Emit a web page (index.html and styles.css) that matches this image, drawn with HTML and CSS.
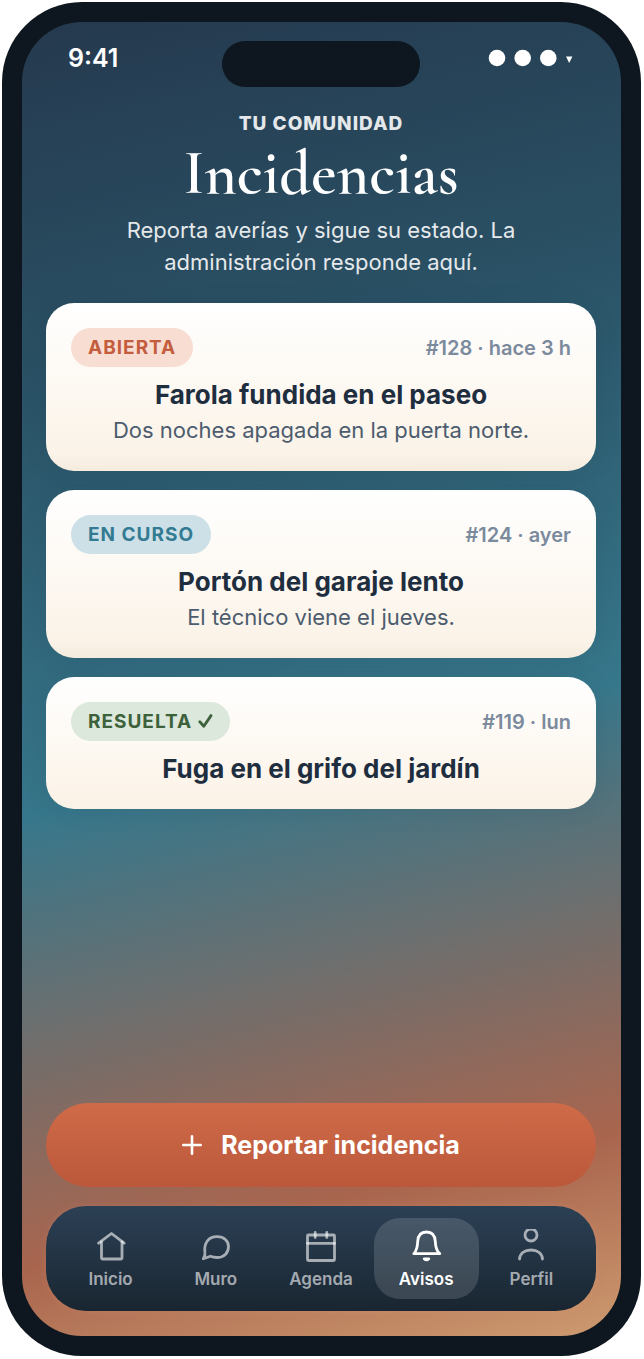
FILE: index.html
```html
<!DOCTYPE html>
<html lang="es">
<head>
<meta charset="utf-8">
<meta name="viewport" content="width=device-width, initial-scale=1">
<title>Incidencias</title>
<link rel="stylesheet" href="styles.css">
</head>
<body>
<div class="phone">
  <div class="screen">
    <div class="status">
      <span class="status-time">9:41</span>
      <span class="island"></span>
      <svg class="status-icons" width="84" height="18" viewBox="0 0 84 18" aria-hidden="true">
        <circle cx="8" cy="9" r="8.3"/><circle cx="33.700" cy="9" r="8.300"/><circle cx="59.300" cy="9" r="8.300"/>
        <path d="M77 7.500h6.400L80.200 14z"/>
      </svg>
    </div>
    <header class="intro">
      <p class="eyebrow">TU COMUNIDAD</p>
      <h1 class="title">Incidencias</h1>
      <p class="lead">Reporta averías y sigue su estado. La administración responde aquí.</p>
    </header>
    <main class="list">
      <article class="card">
        <div class="card-top"><span class="chip chip-open">ABIERTA</span><span class="meta">#128 · hace 3 h</span></div>
        <h2 class="card-title">Farola fundida en el paseo</h2>
        <p class="card-text">Dos noches apagada en la puerta norte.</p>
      </article>
      <article class="card">
        <div class="card-top"><span class="chip chip-progress">EN CURSO</span><span class="meta">#124 · ayer</span></div>
        <h2 class="card-title">Portón del garaje lento</h2>
        <p class="card-text">El técnico viene el jueves.</p>
      </article>
      <article class="card">
        <div class="card-top"><span class="chip chip-done">RESUELTA <svg class="tick" width="15" height="14" viewBox="0 0 15 14" aria-hidden="true"><path d="M1.800 7.800 5.800 12.200 13 1.600"/></svg></span><span class="meta">#119 · lun</span></div>
        <h2 class="card-title">Fuga en el grifo del jardín</h2>
      </article>
    </main>
    <button class="report" type="button">
      <svg width="20" height="20" viewBox="0 0 20 20" aria-hidden="true"><path d="M10 1.300v17.400M1.300 10h17.400"/></svg>
      Reportar incidencia
    </button>
    <nav class="tabs">
      <a class="tab" href="#inicio">
        <svg viewBox="0 0 34 34" aria-hidden="true"><path d="M4.600 14.200 17.500 4.500 30.200 14.200"/><path d="M7.500 13v15.500q0 1.500 1.500 1.500h17.500q1.500 0 1.500-1.500V13"/></svg>
        Inicio
      </a>
      <a class="tab" href="#muro">
        <svg viewBox="0 0 34 34" aria-hidden="true"><path d="M29.500 17.500C29.500 24 25 28.500 18 28.500C15.500 28.500 13.500 28.200 11.500 27.200L4.300 29.800C5.800 27.500 6.300 25.500 5.900 23.500C4.800 14.500 9 7.700 18 7.700C25 7.700 29.500 12 29.500 17.500Z"/></svg>
        Muro
      </a>
      <a class="tab" href="#agenda">
        <svg viewBox="0 0 34 34" aria-hidden="true"><rect x="3.500" y="6" width="27" height="25.500" rx="1"/><path d="M3.500 14.300h27"/><path d="M11.200 3.500v5M22.800 3.500v5"/></svg>
        Agenda
      </a>
      <a class="tab tab-active" href="#avisos" aria-current="page">
        <svg viewBox="0 0 34 34" aria-hidden="true"><path d="M4.800 24.700C7.500 22 8.500 18 8.700 12.500C9 6.500 12 3 17.500 3C23 3 26 6.500 26.300 12.500C26.500 18 27.500 22 30.800 24.700Z"/><path d="M15.200 29.800q2.300 2.200 4.600 0z"/></svg>
        Avisos
      </a>
      <a class="tab" href="#perfil">
        <svg viewBox="0 0 34 34" aria-hidden="true"><circle cx="17" cy="6" r="6"/><path d="M5.500 30C6 24.500 10.500 21 17 21S28 24.500 28.500 30"/></svg>
        Perfil
      </a>
    </nav>
  </div>
</div>
</body>
</html>
```
FILE: styles.css
```css
* { box-sizing: border-box; }
body {
  margin: 0;
  padding: 2px 3px 3px 2px;
  min-height: 100vh;
  display: flex;
  background: #fff;
  font-family: Inter, "Liberation Sans", sans-serif;
}
h1, h2, p { margin: 0; }
.phone {
  flex: 1;
  display: flex;
  padding: 20px;
  border-radius: 80px;
  background: #0e171f;
}
.screen {
  flex: 1;
  display: flex;
  flex-direction: column;
  padding: 19px 25px 25px 24px;
  border-radius: 60px;
  background: linear-gradient(167deg, #25394e 0%, #2a5165 25%, #37778b 55%, #a9654e 86%, #cd9a6f 100%);
}
.status {
  display: grid;
  grid-template-columns: 1fr 198px 1fr;
  align-items: start;
  color: #fff;
}
.status-time {
  padding-left: 22px;
  font-size: 25px;
  line-height: 34px;
  font-weight: 600;
}
.island {
  height: 46px;
  border-radius: 23px;
  background: #0e171f;
}
.status-icons {
  justify-self: end;
  margin: 8px 23px 0 0;
  fill: #fff;
  overflow: visible;
}
.intro {
  padding: 25px 40px;
  color: #fff;
  text-align: center;
}
.eyebrow {
  font-size: 19px;
  line-height: 24px;
  font-weight: 800;
  letter-spacing: 1px;
  opacity: 0.88;
}
.title {
  margin-top: 5px;
  font-family: "Cormorant Garamond", "Liberation Serif", serif;
  font-size: 62px;
  line-height: 66px;
  font-weight: 600;
}
.lead {
  margin-top: 7px;
  font-size: 22px;
  line-height: 32px;
  opacity: 0.88;
}
.list {
  display: flex;
  flex-direction: column;
  gap: 19px;
}
.card {
  padding: 25px;
  border-radius: 28px;
  background: linear-gradient(180deg, #fff 0%, #fbf3e8 90%, #f5ebdf 100%);
  text-align: center;
  box-shadow: 0 2px 24px rgba(20, 45, 65, 0.1);
}
.card:last-child {
  background: linear-gradient(180deg, #fff, #fbf2e6);
}
.card-top {
  display: flex;
  justify-content: space-between;
  align-items: center;
}
.chip {
  padding: 0 17px;
  border-radius: 20px;
  font-size: 19px;
  line-height: 39px;
  font-weight: 700;
  letter-spacing: 1px;
}
.chip-open { background: #f8ded2; color: #c45d3e; }
.chip-progress { background: #cde0e7; color: #327b92; }
.chip-done { background: #dce8db; color: #3c613b; }
.tick {
  fill: none;
  stroke: currentColor;
  stroke-width: 2.800;
  stroke-linecap: round;
  stroke-linejoin: round;
}
.meta {
  font-size: 20px;
  line-height: 24px;
  font-weight: 600;
  color: #7b8a9c;
}
.card-title {
  margin-top: 12px;
  font-size: 26px;
  line-height: 31px;
  font-weight: 700;
  color: #1f2e3f;
}
.card-text {
  margin-top: 4px;
  font-size: 22px;
  line-height: 32px;
  color: #4c5c6e;
}
.report {
  display: flex;
  justify-content: center;
  align-items: center;
  gap: 19px;
  min-height: 84px;
  margin: auto 0 19px;
  border: 0;
  border-radius: 42px;
  background: linear-gradient(180deg, #cf6b48, #bb583b);
  color: #fff;
  font: 700 25px Inter, "Liberation Sans", sans-serif;
}
.report svg {
  fill: none;
  stroke: #fff;
  stroke-width: 2.600;
  stroke-linecap: round;
}
.tabs {
  display: grid;
  grid-template-columns: repeat(5, 1fr);
  padding: 12px;
  border-radius: 40px;
  background: linear-gradient(180deg, #2c4055, #192631);
  box-shadow: 0 0 8px rgba(255, 170, 140, 0.15);
}
.tab {
  display: flex;
  flex-direction: column;
  align-items: center;
  gap: 5px;
  padding: 11px 0 9px;
  border-radius: 26px;
  color: rgba(255, 255, 255, 0.6);
  font-size: 17px;
  line-height: 22px;
  font-weight: 600;
  text-decoration: none;
}
.tab svg {
  width: 34px;
  height: 34px;
  fill: none;
  stroke: currentColor;
  stroke-width: 2.800;
  stroke-linecap: round;
  stroke-linejoin: round;
}
.tab-active {
  background: rgba(255, 255, 255, 0.14);
  color: #fff;
}
```
